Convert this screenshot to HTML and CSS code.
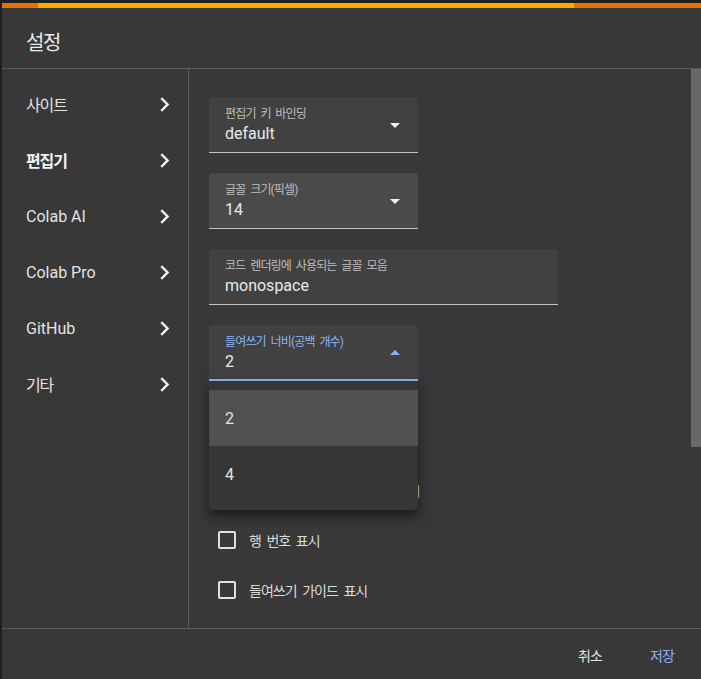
FILE: index.html
```html
<!DOCTYPE html>
<html lang="ko">
<head>
<meta charset="utf-8">
<title>설정</title>
<link rel="stylesheet" href="styles.css">
</head>
<body>
<div class="dialog">
  <div class="progress"><span class="seg seg-a"></span><span class="seg seg-b"></span><span class="seg seg-c"></span></div>
  <header class="head"><h1 class="title ko">설정</h1></header>
  <div class="main">
    <nav class="nav">
      <div class="nav-item"><span class="ko">사이트</span><svg class="chev" viewBox="0 0 24 24"><path d="M10 6L8.59 7.41 13.17 12l-4.58 4.59L10 18l6-6z"/></svg></div>
      <div class="nav-item active"><span class="ko">편집기</span><svg class="chev" viewBox="0 0 24 24"><path d="M10 6L8.59 7.41 13.17 12l-4.58 4.59L10 18l6-6z"/></svg></div>
      <div class="nav-item"><span>Colab AI</span><svg class="chev" viewBox="0 0 24 24"><path d="M10 6L8.59 7.41 13.17 12l-4.58 4.59L10 18l6-6z"/></svg></div>
      <div class="nav-item"><span>Colab Pro</span><svg class="chev" viewBox="0 0 24 24"><path d="M10 6L8.59 7.41 13.17 12l-4.58 4.59L10 18l6-6z"/></svg></div>
      <div class="nav-item"><span>GitHub</span><svg class="chev" viewBox="0 0 24 24"><path d="M10 6L8.59 7.41 13.17 12l-4.58 4.59L10 18l6-6z"/></svg></div>
      <div class="nav-item"><span class="ko">기타</span><svg class="chev" viewBox="0 0 24 24"><path d="M10 6L8.59 7.41 13.17 12l-4.58 4.59L10 18l6-6z"/></svg></div>
    </nav>
    <section class="content">
      <div class="pane">
        <div class="field">
          <div class="field-text">
            <div class="label ko">편집기 키 바인딩</div>
            <div class="value">default</div>
          </div>
          <svg class="arrow" viewBox="0 0 24 24"><polygon points="7,10 12,15 17,10"/></svg>
        </div>
        <div class="field hover">
          <div class="field-text">
            <div class="label ko">글꼴 크기(픽셀)</div>
            <div class="value">14</div>
          </div>
          <svg class="arrow" viewBox="0 0 24 24"><polygon points="7,10 12,15 17,10"/></svg>
        </div>
        <div class="field wide">
          <div class="field-text">
            <div class="label ko">코드 렌더링에 사용되는 글꼴 모음</div>
            <div class="value">monospace</div>
          </div>
        </div>
        <div class="field focused">
          <div class="field-text">
            <div class="label ko">들여쓰기 너비(공백 개수)</div>
            <div class="value">2</div>
          </div>
          <svg class="arrow up" viewBox="0 0 24 24"><polygon points="7,14 12,9 17,14"/></svg>
          <div class="menu">
            <div class="menu-item selected">2</div>
            <div class="menu-item">4</div>
          </div>
        </div>
        <div class="checks">
          <label class="check"><span class="box"></span><span class="ko">괄호 자동 닫기</span></label>
          <label class="check"><span class="box"></span><span class="ko">입력 중 코드 제안을 자동 표시</span></label>
          <label class="check"><span class="box"></span><span class="ko">행 번호 표시</span></label>
          <label class="check"><span class="box"></span><span class="ko">들여쓰기 가이드 표시</span></label>
        </div>
      </div>
      <div class="scrollbar"><div class="thumb"></div></div>
    </section>
  </div>
  <footer class="actions">
    <button class="btn ko">취소</button>
    <button class="btn primary ko">저장</button>
  </footer>
</div>
</body>
</html>
```

FILE: styles.css
```css
html, body {
  margin: 0;
  padding: 0;
}
body {
  background: #1f1f1f;
  width: 701px;
  height: 679px;
  overflow: hidden;
  font-family: "Roboto", "Noto Sans CJK KR", sans-serif;
  color: #e8eaed;
}
.ko {
  letter-spacing: -0.07em;
  word-spacing: 0.22em;
}
.dialog {
  margin: 3px 0 0 2px;
  width: 700px;
  height: 690px;
  background: #383838;
  display: flex;
  flex-direction: column;
}
.progress {
  display: flex;
  height: 5px;
  flex: none;
}
.seg-a { width: 36px; background: #e8710a; }
.seg-b { width: 536px; background: #f9ab00; }
.seg-c { flex: 1; background: #e8710a; }
.head {
  height: 61px;
  flex: none;
  box-sizing: border-box;
  display: flex;
  align-items: flex-end;
  padding: 0 24px 11px;
  border-bottom: 1px solid #5c5c5c;
}
.title {
  margin: 0;
  font-size: 20px;
  line-height: 28px;
  font-weight: 400;
  color: #e8eaed;
}
.main {
  height: 560px;
  flex: none;
  box-sizing: border-box;
  display: flex;
  border-bottom: 1px solid #5c5c5c;
}
.nav {
  width: 187px;
  box-sizing: border-box;
  border-right: 1px solid #5c5c5c;
  padding-top: 7px;
  flex: none;
}
.nav-item {
  height: 56px;
  display: flex;
  align-items: center;
  justify-content: space-between;
  padding: 0 9px 0 24px;
  font-size: 16px;
  color: #e3e3e3;
}
.nav-item.active {
  font-weight: 700;
  color: #f1f1f1;
}
.chev {
  width: 29px;
  height: 29px;
  fill: #f1f1f1;
}
.content {
  flex: 1;
  display: flex;
  overflow: hidden;
}
.pane {
  flex: 1;
  padding: 28px 0 0 20px;
}
.scrollbar {
  width: 11px;
  flex: none;
}
.thumb {
  height: 378px;
  background: #686868;
}
.field {
  position: relative;
  width: 209px;
  height: 56px;
  box-sizing: border-box;
  background: #414141;
  border-radius: 4px 4px 0 0;
  border-bottom: 1px solid #c4c4c4;
  padding: 9px 11px 0 16px;
  margin-bottom: 20px;
  display: flex;
  align-items: flex-start;
}
.field.wide { width: 349px; }
.field.hover { background: #4a4a4a; }
.field.focused {
  border-bottom: 2px solid #8ab4f8;
  margin-bottom: 34px;
}
.field-text {
  flex: 1;
}
.label {
  font-size: 12px;
  line-height: 16px;
  color: #bdbdbd;
  white-space: nowrap;
}
.focused .label { color: #8ab4f8; }
.value {
  font-size: 16px;
  line-height: 24px;
  color: #e8eaed;
}
.arrow {
  width: 24px;
  height: 24px;
  margin-top: 7px;
  fill: #f1f1f1;
  flex: none;
}
.arrow.up { fill: #8ab4f8; }
.menu {
  position: absolute;
  left: 0;
  top: 57px;
  width: 209px;
  padding: 8px 0;
  background: #363636;
  border-radius: 4px;
  box-shadow: 0 5px 5px -3px rgba(0,0,0,.3), 0 8px 10px 1px rgba(0,0,0,.2), 0 3px 14px 2px rgba(0,0,0,.18);
  z-index: 5;
}
.menu-item {
  height: 56px;
  display: flex;
  align-items: center;
  padding: 0 16px;
  font-size: 16px;
  color: #e3e3e3;
}
.menu-item.selected {
  background: #505050;
}
.checks {
  display: flex;
  flex-direction: column;
}
.check {
  height: 50px;
  display: flex;
  align-items: center;
  gap: 13px;
  padding-left: 9px;
  font-size: 14px;
  color: #dcdcdc;
  white-space: nowrap;
}
.box {
  width: 18px;
  height: 18px;
  box-sizing: border-box;
  border: 2px solid #e0e0e0;
  border-radius: 2px;
  flex: none;
}
.actions {
  flex: none;
  display: flex;
  justify-content: flex-end;
  gap: 8px;
  padding: 8px;
}
.btn {
  min-width: 64px;
  height: 36px;
  padding: 0 8px;
  background: none;
  border: none;
  font-family: "Roboto", "Noto Sans CJK KR", sans-serif;
  font-size: 14px;
  color: #e3e3e3;
}
.btn.primary { color: #8ab4f8; }
```
